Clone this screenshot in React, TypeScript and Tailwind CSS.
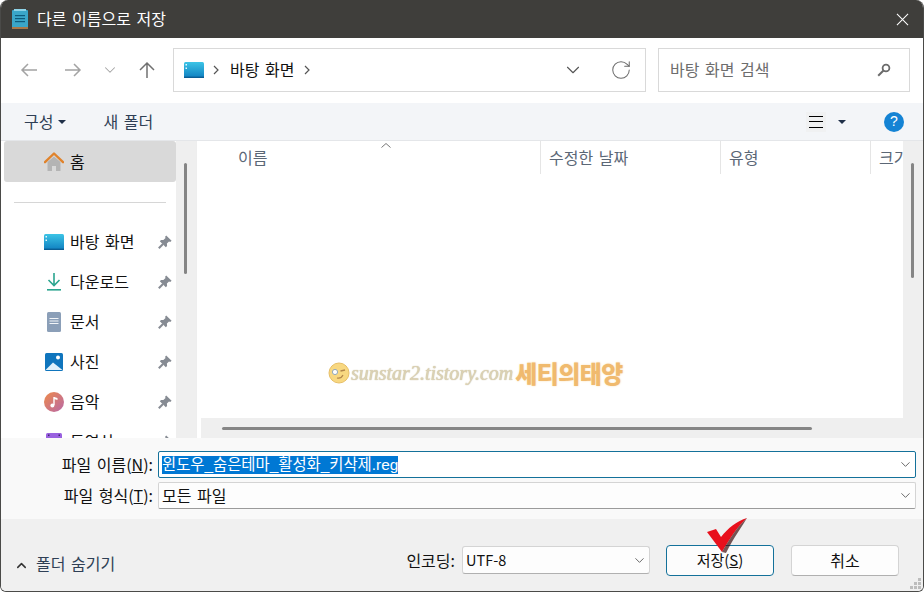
import { ChevronDown, ChevronUp, RotateCw } from "lucide-react";

const font = { fontFamily: '"Noto Sans CJK KR", "Noto Sans", sans-serif' };

function DesktopIcon({ className }: { className?: string }) {
  return (
    <svg viewBox="0 0 20 16" className={className}>
      <defs>
        <linearGradient id="desk" x1="0" y1="0" x2="0" y2="1">
          <stop offset="0" stopColor="#3cc4e6" />
          <stop offset="1" stopColor="#0f7fc0" />
        </linearGradient>
      </defs>
      <rect x="0" y="0" width="20" height="16" rx="1.5" fill="url(#desk)" />
      <rect x="0" y="14.6" width="20" height="1.4" fill="#0a5d94" />
      <rect x="1.5" y="2" width="1.5" height="1.5" fill="#e6f8ff" />
      <rect x="1.5" y="5.5" width="1.5" height="1.5" fill="#e6f8ff" />
    </svg>
  );
}

function PinIcon() {
  return (
    <svg viewBox="0 0 14 14" className="h-[14px] w-[14px]">
      <path d="M8.2 0.4 L13.6 5.8 L12.2 6.9 L11 6.5 L8.9 8.6 L9.1 11 L7.8 12.2 L1.8 6.2 L3 4.9 L5.4 5.1 L7.5 3 L7.1 1.8 Z" fill="#868b93" />
      <path d="M5 9 L0.8 13.2" stroke="#868b93" strokeWidth="2" />
    </svg>
  );
}

function HomeIcon() {
  return (
    <svg viewBox="0 0 20 20" className="h-5 w-5">
      <path d="M3.5 10 L10 4.5 L16.5 10 V19 H12 V14 H8 V19 H3.5 Z" fill="#b4b4b4" />
      <path d="M1 10.2 L10 1.5 L19 10.2" fill="none" stroke="#e0832c" strokeWidth="2.4" strokeLinejoin="round" strokeLinecap="round" />
    </svg>
  );
}

function DownloadIcon() {
  return (
    <svg viewBox="0 0 20 20" className="h-5 w-5">
      <path d="M10 1 V13 M4.5 8 L10 13.5 L15.5 8" fill="none" stroke="#2ba58f" strokeWidth="1.6" />
      <rect x="3" y="17" width="14" height="1.6" fill="#2ba58f" />
    </svg>
  );
}

function DocIcon() {
  return (
    <svg viewBox="0 0 20 20" className="h-5 w-5">
      <rect x="3" y="0" width="14" height="20" rx="1.5" fill="#8b9fb8" />
      <rect x="5.5" y="6" width="9" height="1" fill="#f2f5f8" />
      <rect x="5.5" y="8.5" width="9" height="1" fill="#f2f5f8" />
      <rect x="5.5" y="11" width="9" height="1" fill="#f2f5f8" />
    </svg>
  );
}

function PhotoIcon() {
  return (
    <svg viewBox="0 0 20 20" className="h-5 w-5">
      <rect x="1" y="1" width="18" height="18" rx="1.5" fill="#0f75bd" />
      <circle cx="14" cy="5.5" r="2" fill="#ffffff" />
      <path d="M1.5 18 L9 10.5 L18.5 18 Z" fill="#dff1fb" />
    </svg>
  );
}

function MusicIcon() {
  return (
    <svg viewBox="0 0 20 20" className="h-5 w-5">
      <defs>
        <linearGradient id="music" x1="0" y1="0" x2="1" y2="1">
          <stop offset="0" stopColor="#ee8a4a" />
          <stop offset="1" stopColor="#b868a8" />
        </linearGradient>
      </defs>
      <circle cx="10" cy="10" r="10" fill="url(#music)" />
      <path d="M10 5 V13" stroke="#fff" strokeWidth="1.4" />
      <path d="M10 5 L13.5 6 V8 L10 7 Z" fill="#fff" />
      <circle cx="8.4" cy="13.4" r="2" fill="#fff" />
    </svg>
  );
}

function VideoIcon() {
  return (
    <svg viewBox="0 0 20 20" className="h-5 w-5">
      <rect x="2" y="1" width="16" height="18" rx="1.5" fill="#9a62e0" />
      <rect x="4" y="2.5" width="1.5" height="1.5" fill="#3f2a6a" />
      <rect x="14.5" y="2.5" width="1.5" height="1.5" fill="#3f2a6a" />
    </svg>
  );
}

function NavArrow({ dir, color }: { dir: "left" | "right" | "up"; color: string }) {
  const d = {
    left: "M18 10 H3 M9 4 L3 10 L9 16",
    right: "M2 10 H17 M11 4 L17 10 L11 16",
    up: "M10 18 V3 M3 10 L10 3 L17 10",
  }[dir];
  return (
    <svg viewBox="0 0 20 20" className="h-5 w-5">
      <path d={d} fill="none" stroke={color} strokeWidth="1.5" />
    </svg>
  );
}

function Crumb() {
  return (
    <svg viewBox="0 0 6 10" className="h-[10px] w-[6px]">
      <path d="M1 1 L5 5 L1 9" fill="none" stroke="#555" strokeWidth="1.2" />
    </svg>
  );
}

function SidebarRow({ icon, label }: { icon: React.ReactNode; label: string }) {
  return (
    <div className="flex h-10 shrink-0 items-center pl-10 pr-1">
      <div className="flex w-5 justify-center">{icon}</div>
      <span className="ml-[6px] flex-1 pb-[2px] text-[16px] text-[#111]">{label}</span>
      <PinIcon />
    </div>
  );
}

function ColHeader({ label, w }: { label: string; w: string }) {
  return (
    <div className={`flex h-[33px] shrink-0 items-center border-r border-[#e5e5e5] pb-[2px] pl-2 text-[16px] text-[#5b6776] ${w}`}>
      {label}
    </div>
  );
}

export default function App() {
  return (
    <div style={font} className="relative flex h-[592px] w-[924px] flex-col overflow-hidden rounded-t-[8px] rounded-b-[6px] border-x border-b border-[#4a4a48] bg-white [word-spacing:2px]">
      {/* title bar */}
      <div className="-mx-px flex h-[38px] shrink-0 items-center bg-[#3f3e3b] pl-[12px] pr-[15px]">
        <svg viewBox="0 0 16 20" className="h-5 w-4">
          <rect x="0" y="1" width="16" height="18" rx="1" fill="#3aa6c9" />
          <rect x="0" y="18" width="16" height="2" fill="#a8784a" />
          <rect x="2" y="0" width="12" height="2" fill="#8ed3e8" />
          <rect x="3" y="6" width="10" height="1.2" fill="#0d5a7c" />
          <rect x="3" y="9" width="10" height="1.2" fill="#0d5a7c" />
          <rect x="3" y="12" width="10" height="1.2" fill="#0d5a7c" />
        </svg>
        <span className="ml-[9px] flex-1 pb-[3px] text-[16px] text-white">다른 이름으로 저장</span>
        <svg viewBox="0 0 14 14" className="h-[13px] w-[13px]">
          <path d="M1 1 L13 13 M13 1 L1 13" stroke="#fff" strokeWidth="1.1" />
        </svg>
      </div>

      {/* nav row */}
      <div className="flex h-[65px] shrink-0 items-center pb-[1px] pl-[18px] pr-[13px]">
        <NavArrow dir="left" color="#a3a3a3" />
        <div className="ml-6"><NavArrow dir="right" color="#a3a3a3" /></div>
        <ChevronDown className="ml-[18px] h-[18px] w-[18px] text-[#a3a3a3]" strokeWidth={1.4} />
        <div className="ml-[18px]"><NavArrow dir="up" color="#707070" /></div>
        <div className="ml-[16px] flex h-[44px] w-[473px] items-center border border-[#d9d9d9] pl-[10px]">
          <DesktopIcon className="h-4 w-5" />
          <div className="ml-[9px]"><Crumb /></div>
          <span className="ml-[11px] pb-[2px] text-[16px] text-[#111]">바탕 화면</span>
          <div className="ml-[10px]"><Crumb /></div>
          <ChevronDown className="ml-auto h-[22px] w-[22px] text-[#555]" strokeWidth={1.2} />
          <RotateCw className="ml-[26px] mr-[13px] h-[22px] w-[22px] text-[#6b6b6b]" strokeWidth={1.1} />
        </div>
        <div className="ml-[12px] flex h-[44px] flex-1 items-center justify-between border border-[#d9d9d9] pl-[11px] pr-[18px] text-[16px] text-[#6d6d6d]">
          <span className="pb-[2px]">바탕 화면 검색</span>
          <svg viewBox="0 0 14 14" className="h-[14px] w-[14px]">
            <circle cx="9" cy="5" r="3.4" fill="none" stroke="#6b6b6b" strokeWidth="1.8" />
            <path d="M6.5 7.5 L1.2 12.8" stroke="#6b6b6b" strokeWidth="2" />
          </svg>
        </div>
      </div>

      {/* toolbar */}
      <div className="flex h-[38px] shrink-0 items-center border-b border-[#e4e6e9] bg-[#f3f5f8] pl-[23px] pr-[19px] text-[16px] text-[#2f3f55]">
        <span className="pb-[2px]">구성</span>
        <span className="ml-[5px] h-0 w-0 border-x-[4px] border-t-[4px] border-x-transparent border-t-[#1f2f48]" />
        <span className="ml-[37px] pb-[2px]">새 폴더</span>
        <div className="ml-auto flex items-center">
          <div className="flex h-[20px] w-[20px] flex-col justify-between bg-[#f0f1f2] px-[3px] py-[4px]">
            <div className="h-px bg-black" />
            <div className="h-px bg-black" />
            <div className="h-px bg-black" />
          </div>
          <span className="ml-[12px] h-0 w-0 border-x-[4px] border-t-[4px] border-x-transparent border-t-[#1f2f48]" />
          <div className="ml-[38px] flex h-5 w-5 items-center justify-center rounded-full bg-[#1483d4] text-[14px] text-white" style={{ fontFamily: '"Liberation Sans", sans-serif' }}>?</div>
        </div>
      </div>

      {/* main */}
      <div className="flex min-h-0 flex-1">
        <div className="flex w-[175px] shrink-0 flex-col overflow-hidden pl-[3px]">
          <div className="flex h-[41px] shrink-0 items-center rounded-[3px] bg-[#d9d9d9] pl-[40px]">
            <HomeIcon />
            <span className="ml-[6px] pb-[2px] text-[16px] text-[#111]">홈</span>
          </div>
          <div className="ml-[10px] mr-[10px] mt-[20px] mb-[19px] h-px shrink-0 bg-[#d6d6d6]" />
          <SidebarRow icon={<DesktopIcon className="h-4 w-5" />} label="바탕 화면" />
          <SidebarRow icon={<DownloadIcon />} label="다운로드" />
          <SidebarRow icon={<DocIcon />} label="문서" />
          <SidebarRow icon={<PhotoIcon />} label="사진" />
          <SidebarRow icon={<MusicIcon />} label="음악" />
          <SidebarRow icon={<VideoIcon />} label="동영상" />
        </div>
        <div className="w-[20px] shrink-0 bg-[#efefef] pl-[8px] pt-[22px]">
          <div className="h-[111px] w-[3px] rounded-full bg-[#858585]" />
        </div>
        <div className="flex min-w-0 flex-1 flex-col border-l border-[#eeeeee] pl-[1px]">
          <div className="flex min-h-0 flex-1">
            <div className="flex min-w-0 flex-1 flex-col">
              <div className="relative flex overflow-hidden">
                <svg viewBox="0 0 10 5" className="absolute left-[183px] top-[2px] h-[5px] w-[10px]">
                  <path d="M0.5 4.5 L5 0.5 L9.5 4.5" fill="none" stroke="#777" strokeWidth="1" />
                </svg>
                <ColHeader label="이름" w="w-[343px] pl-[40px]" />
                <ColHeader label="수정한 날짜" w="w-[180px]" />
                <ColHeader label="유형" w="w-[150px]" />
                <div className="flex h-[33px] items-center whitespace-nowrap pb-[2px] pl-2 text-[16px] text-[#5b6776]">크기</div>
              </div>
              <div className="flex-1" />
              <div className="ml-[3px] flex h-[20px] shrink-0 items-center bg-[#efefef] pl-[21px]">
                <div className="h-[3px] w-[590px] rounded-full bg-[#858585]" />
              </div>
            </div>
            <div className="w-[20px] shrink-0 bg-[#efefef] pl-[8px] pt-[22px]">
              <div className="h-[115px] w-[3px] rounded-full bg-[#858585]" />
            </div>
          </div>
        </div>
      </div>

      {/* file name form */}
      <div className="flex h-[81px] shrink-0 flex-col gap-[4px] bg-[#f9f9f9] pl-[157px] pr-[7px] pt-[13px]">
        <div className="relative flex h-[27px] items-center rounded-[2px] border border-[#14719a] bg-white pl-[2px] pr-[2px]">
          <span className="absolute right-full mr-[6px] whitespace-nowrap pb-[2px] text-[16px] text-[#111]">파일 이름(<span className="underline">N</span>):</span>
          <span className="ml-[1px] block h-[18px] whitespace-nowrap bg-[#0078d4] text-[15.4px] leading-[17px] text-white" style={{ fontFamily: '"Liberation Sans", "Noto Sans CJK KR", sans-serif' }}>윈도우_숨은테마_활성화_키삭제.reg</span>
          <ChevronDown className="ml-auto h-[15px] w-[15px] text-[#555]" strokeWidth={1.4} />
        </div>
        <div className="relative flex h-[27px] items-center rounded-[2px] border border-[#d4d4d4] border-b-[#9b9b9b] bg-[#fdfdfd] pl-[3px] pr-[2px]">
          <span className="absolute right-full mr-[6px] whitespace-nowrap pb-[2px] text-[16px] text-[#111]">파일 형식(<span className="underline">T</span>):</span>
          <span className="pb-[2px] text-[16px] text-[#111]">모든 파일</span>
          <ChevronDown className="ml-auto h-[15px] w-[15px] text-[#555]" strokeWidth={1.4} />
        </div>
      </div>

      {/* footer */}
      <div className="flex h-[72px] shrink-0 items-center bg-[#f0f0f0] pl-[13px] pr-[24px] pt-[10px]">
        <ChevronUp className="mt-[10px] h-[15px] w-[15px] text-[#333]" strokeWidth={2.4} />
        <span className="ml-[7px] mt-[6px] text-[16px] text-[#2f3f55]">폴더 숨기기</span>
        <span className="ml-auto text-[16px] text-[#111]">인코딩:</span>
        <div className="ml-[7px] flex h-[28px] w-[188px] items-center justify-between rounded-[3px] border border-[#d4d4d4] border-b-[#b0b0b0] bg-[#fdfdfd] pl-[3px] pr-[2px] text-[14.5px] text-[#111]">
          <span>UTF-8</span>
          <ChevronDown className="h-[15px] w-[15px] text-[#555]" strokeWidth={1.4} />
        </div>
        <button className="ml-[16px] h-[31px] w-[108px] rounded-[4px] border border-[#14719a] bg-[#fcfcfc] text-[15px] text-[#111]">
          저장(<span className="underline">S</span>)
        </button>
        <button className="ml-[17px] h-[31px] w-[108px] rounded-[4px] border border-[#d4d4d4] border-b-[#b0b0b0] bg-[#fdfdfd] text-[16px] text-[#111]">
          취소
        </button>
      </div>

      {/* resize grip */}
      <div className="absolute bottom-[2px] right-[2px] grid grid-cols-3 gap-[1px]">
        {[0, 0, 1, 0, 1, 1, 1, 1, 1].map((on, i) => (
          <div key={i} className={on ? "h-[3px] w-[3px] bg-[#bdbdbd]" : "h-[3px] w-[3px]"} />
        ))}
      </div>

      {/* watermark */}
      <div className="absolute left-[327px] top-[361px] flex items-center opacity-80">
        <svg viewBox="0 0 22 22" className="h-[22px] w-[22px]">
          <circle cx="11" cy="11" r="10" fill="#f7cf62" stroke="#e2b042" />
          <circle cx="7" cy="10" r="2.6" fill="#fff" stroke="#7a94a8" />
          <path d="M12.5 9 L17 8" stroke="#a06a20" strokeWidth="1.4" />
          <path d="M9 16 Q13 17 15 13" fill="none" stroke="#a06a20" strokeWidth="1.2" />
        </svg>
        <span className="ml-[1px] text-[20px] italic leading-none text-[#d4c8a4] [word-spacing:0] [text-shadow:0_0_1px_#a89668]" style={{ fontFamily: '"Liberation Serif", serif' }}>sunstar2.tistory.com</span>
        <span className="ml-[2px] text-[24px] font-black leading-none tracking-[-0.6px] text-[#eda94a] [text-shadow:0_0_2px_#f8d9a0]">세티의태양</span>
      </div>

      {/* red check mark */}
      <svg viewBox="0 0 42 36" className="absolute left-[705px] top-[517px] h-9 w-[42px]">
        <path d="M1 15 L10 12 L15 20 C22 11 31 4 41 1 C32 9 24 21 16 35 Z" fill="#e8101c" />
        <path d="M16 35 C24 21 32 9 41 1 C37 8 28 20 20 36 Z" fill="#3d1010" opacity="0.7" />
      </svg>
    </div>
  );
}
